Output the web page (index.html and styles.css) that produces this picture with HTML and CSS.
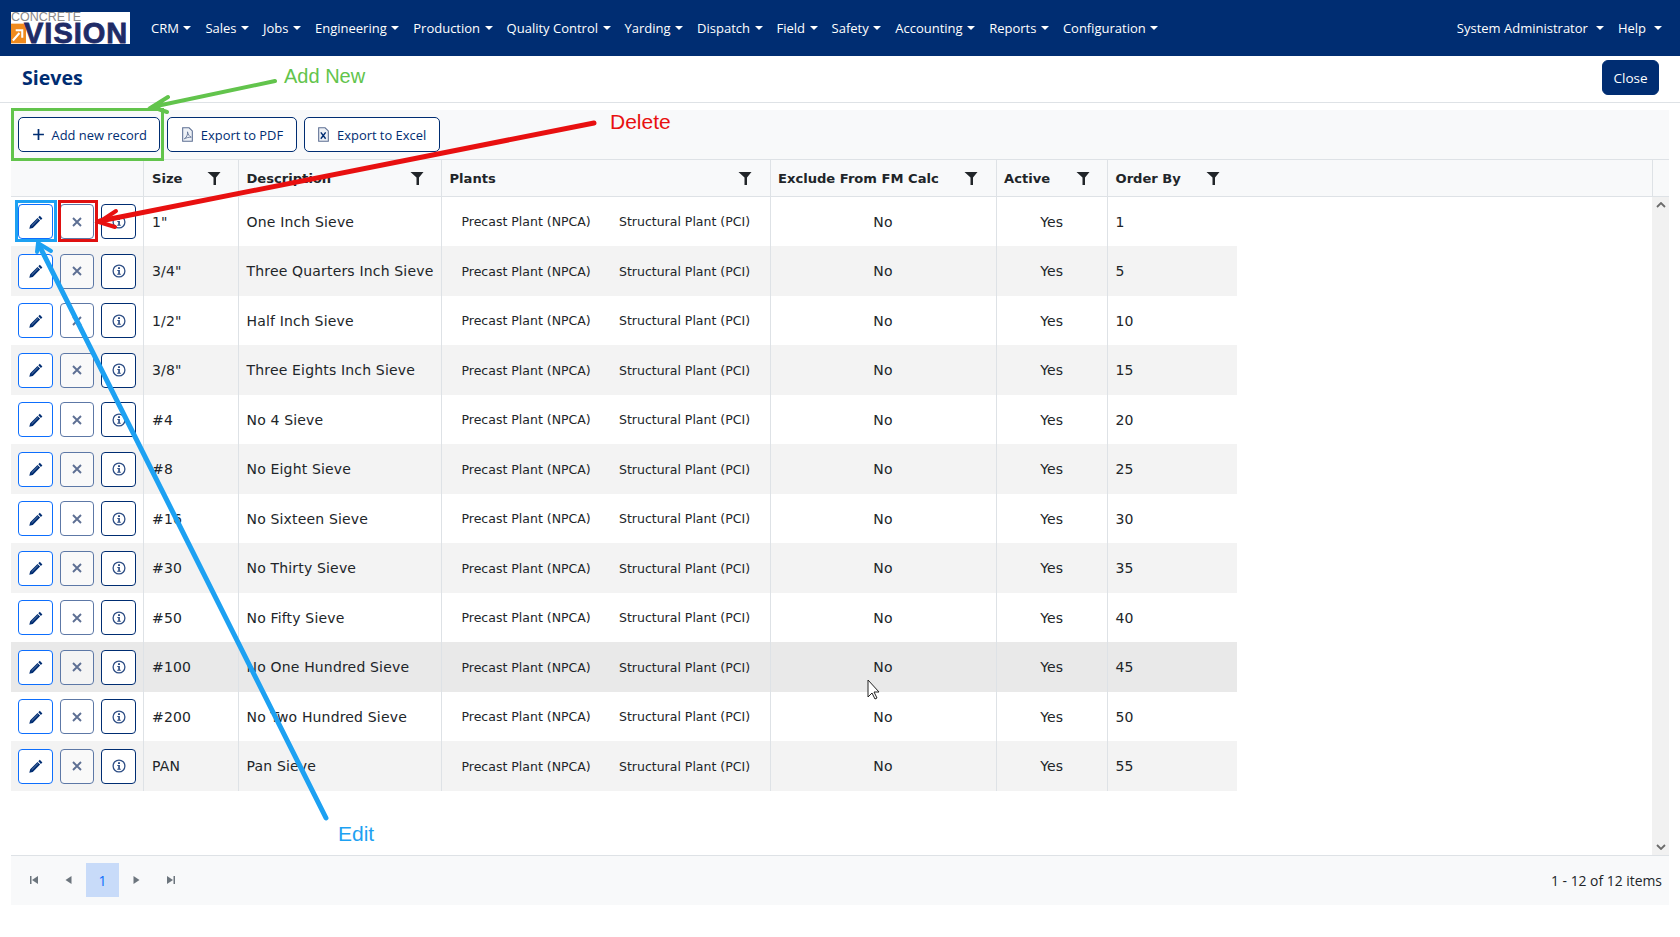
FILE: index.html
```html
<!DOCTYPE html>
<html lang="en">
<head>
<meta charset="utf-8">
<title>Sieves</title>
<link rel="stylesheet" href="styles.css">
</head>
<body>
<svg class="defs" width="0" height="0" aria-hidden="true">
  <symbol id="i-filter" viewBox="0 0 14 16"><path d="M.5 2h13L9 7.500V15H6.500V7.500z" fill="#212529"/></symbol>
  <symbol id="i-edit" viewBox="0 0 16 16"><path d="M11.800 1.800l2.600 2.600-1.500 1.500-2.600-2.600zM9.500 4l2.600 2.600-7.300 7.300-3.500.9.900-3.500z" fill="#002d72"/><path d="M3.700 11.800l6.300-6.300" stroke="#7f95bb" stroke-width=".8"/></symbol>
  <symbol id="i-x" viewBox="0 0 16 16"><path d="M4 4l8 8M12 4l-8 8" stroke="#5d6f93" stroke-width="1.900" fill="none"/></symbol>
  <symbol id="i-info" viewBox="0 0 16 16"><circle cx="8" cy="8" r="5.900" fill="none" stroke="#2f4f86" stroke-width="1.300"/><path d="M7 4.200h2V6H7zM6.300 7h2.600v3.700h.9v1.100H6.200v-1.100h1V8h-.9z" fill="#2f4f86"/></symbol>
</svg>

<nav class="navbar">
  <div class="logo">
    <span class="logo-top">CONCRETE</span>
    <span class="logo-mark"><svg viewBox="0 0 16 21" width="15" height="21"><rect width="16" height="21" fill="#f08a1d"/><path d="M2 18L9 10M5 7h7v8" stroke="#fff" stroke-width="2.200" fill="none"/></svg></span>
    <span class="logo-main">VISION</span>
  </div>
  <ul class="menu">
    <li class="menu-item">CRM</li>
    <li class="menu-item">Sales</li>
    <li class="menu-item">Jobs</li>
    <li class="menu-item">Engineering</li>
    <li class="menu-item">Production</li>
    <li class="menu-item">Quality Control</li>
    <li class="menu-item">Yarding</li>
    <li class="menu-item">Dispatch</li>
    <li class="menu-item">Field</li>
    <li class="menu-item">Safety</li>
    <li class="menu-item">Accounting</li>
    <li class="menu-item">Reports</li>
    <li class="menu-item">Configuration</li>
  </ul>
  <ul class="menu menu-right">
    <li class="menu-item wide">System Administrator</li>
    <li class="menu-item wide">Help</li>
  </ul>
</nav>

<header class="title-bar">
  <h1 class="title">Sieves</h1>
  <button class="close-btn">Close</button>
</header>

<main class="grid">
  <div class="toolbar">
    <button class="tool-btn"><svg class="tool-icon" viewBox="0 0 12 12"><path d="M6 1v10M1 6h10" stroke="#002d72" stroke-width="1.600"/></svg>Add new record</button>
    <button class="tool-btn"><svg class="tool-icon" viewBox="0 0 12 14"><path d="M1.500.7h6l3 3v9.600h-9z" fill="#eef1f6" stroke="#5d6f93"/><path d="M3 11c2-1 3.500-4 3-6.500C6.500 7 8 9 9.500 9.500 7 9.500 5 10 3 11z" fill="none" stroke="#5d6f93" stroke-width=".8"/></svg>Export to PDF</button>
    <button class="tool-btn"><svg class="tool-icon" viewBox="0 0 12 14"><path d="M1.500.7h6l3 3v9.600h-9z" fill="#eef1f6" stroke="#5d6f93"/><path d="M3.500 5l4.500 6M8 5l-4.500 6" stroke="#002d72" stroke-width="1.300"/></svg>Export to Excel</button>
  </div>

  <table class="table head">
    <colgroup><col class="c1"><col class="c2"><col class="c3"><col class="c4"><col class="c5"><col class="c6"><col class="c7"><col class="c8"><col class="c9"></colgroup>
    <thead>
      <tr>
        <th></th>
        <th><div class="th-in">Size<svg class="filter"><use href="#i-filter"/></svg></div></th>
        <th><div class="th-in">Description<svg class="filter"><use href="#i-filter"/></svg></div></th>
        <th><div class="th-in">Plants<svg class="filter"><use href="#i-filter"/></svg></div></th>
        <th><div class="th-in">Exclude From FM Calc<svg class="filter"><use href="#i-filter"/></svg></div></th>
        <th><div class="th-in">Active<svg class="filter"><use href="#i-filter"/></svg></div></th>
        <th><div class="th-in">Order By<svg class="filter"><use href="#i-filter"/></svg></div></th>
        <th class="no-border"></th>
        <th></th>
      </tr>
    </thead>
  </table>

  <div class="body-wrap">
    <div class="body-scroll">
      <table class="table rows">
        <colgroup><col class="c1"><col class="c2"><col class="c3"><col class="c4"><col class="c5"><col class="c6"><col class="c7"></colgroup>
        <tbody>
          <tr><td class="acts"><button class="ib ib-edit"><svg><use href="#i-edit"/></svg></button><button class="ib ib-del"><svg><use href="#i-x"/></svg></button><button class="ib ib-info"><svg><use href="#i-info"/></svg></button></td><td>1"</td><td>One Inch Sieve</td><td class="plants"><span>Precast Plant (NPCA)</span><span>Structural Plant (PCI)</span></td><td class="ctr">No</td><td class="ctr">Yes</td><td>1</td></tr>
          <tr><td class="acts"><button class="ib ib-edit"><svg><use href="#i-edit"/></svg></button><button class="ib ib-del"><svg><use href="#i-x"/></svg></button><button class="ib ib-info"><svg><use href="#i-info"/></svg></button></td><td>3/4"</td><td>Three Quarters Inch Sieve</td><td class="plants"><span>Precast Plant (NPCA)</span><span>Structural Plant (PCI)</span></td><td class="ctr">No</td><td class="ctr">Yes</td><td>5</td></tr>
          <tr><td class="acts"><button class="ib ib-edit"><svg><use href="#i-edit"/></svg></button><button class="ib ib-del"><svg><use href="#i-x"/></svg></button><button class="ib ib-info"><svg><use href="#i-info"/></svg></button></td><td>1/2"</td><td>Half Inch Sieve</td><td class="plants"><span>Precast Plant (NPCA)</span><span>Structural Plant (PCI)</span></td><td class="ctr">No</td><td class="ctr">Yes</td><td>10</td></tr>
          <tr><td class="acts"><button class="ib ib-edit"><svg><use href="#i-edit"/></svg></button><button class="ib ib-del"><svg><use href="#i-x"/></svg></button><button class="ib ib-info"><svg><use href="#i-info"/></svg></button></td><td>3/8"</td><td>Three Eights Inch Sieve</td><td class="plants"><span>Precast Plant (NPCA)</span><span>Structural Plant (PCI)</span></td><td class="ctr">No</td><td class="ctr">Yes</td><td>15</td></tr>
          <tr><td class="acts"><button class="ib ib-edit"><svg><use href="#i-edit"/></svg></button><button class="ib ib-del"><svg><use href="#i-x"/></svg></button><button class="ib ib-info"><svg><use href="#i-info"/></svg></button></td><td>#4</td><td>No 4 Sieve</td><td class="plants"><span>Precast Plant (NPCA)</span><span>Structural Plant (PCI)</span></td><td class="ctr">No</td><td class="ctr">Yes</td><td>20</td></tr>
          <tr><td class="acts"><button class="ib ib-edit"><svg><use href="#i-edit"/></svg></button><button class="ib ib-del"><svg><use href="#i-x"/></svg></button><button class="ib ib-info"><svg><use href="#i-info"/></svg></button></td><td>#8</td><td>No Eight Sieve</td><td class="plants"><span>Precast Plant (NPCA)</span><span>Structural Plant (PCI)</span></td><td class="ctr">No</td><td class="ctr">Yes</td><td>25</td></tr>
          <tr><td class="acts"><button class="ib ib-edit"><svg><use href="#i-edit"/></svg></button><button class="ib ib-del"><svg><use href="#i-x"/></svg></button><button class="ib ib-info"><svg><use href="#i-info"/></svg></button></td><td>#16</td><td>No Sixteen Sieve</td><td class="plants"><span>Precast Plant (NPCA)</span><span>Structural Plant (PCI)</span></td><td class="ctr">No</td><td class="ctr">Yes</td><td>30</td></tr>
          <tr><td class="acts"><button class="ib ib-edit"><svg><use href="#i-edit"/></svg></button><button class="ib ib-del"><svg><use href="#i-x"/></svg></button><button class="ib ib-info"><svg><use href="#i-info"/></svg></button></td><td>#30</td><td>No Thirty Sieve</td><td class="plants"><span>Precast Plant (NPCA)</span><span>Structural Plant (PCI)</span></td><td class="ctr">No</td><td class="ctr">Yes</td><td>35</td></tr>
          <tr><td class="acts"><button class="ib ib-edit"><svg><use href="#i-edit"/></svg></button><button class="ib ib-del"><svg><use href="#i-x"/></svg></button><button class="ib ib-info"><svg><use href="#i-info"/></svg></button></td><td>#50</td><td>No Fifty Sieve</td><td class="plants"><span>Precast Plant (NPCA)</span><span>Structural Plant (PCI)</span></td><td class="ctr">No</td><td class="ctr">Yes</td><td>40</td></tr>
          <tr class="hover"><td class="acts"><button class="ib ib-edit"><svg><use href="#i-edit"/></svg></button><button class="ib ib-del"><svg><use href="#i-x"/></svg></button><button class="ib ib-info"><svg><use href="#i-info"/></svg></button></td><td>#100</td><td>No One Hundred Sieve</td><td class="plants"><span>Precast Plant (NPCA)</span><span>Structural Plant (PCI)</span></td><td class="ctr">No</td><td class="ctr">Yes</td><td>45</td></tr>
          <tr><td class="acts"><button class="ib ib-edit"><svg><use href="#i-edit"/></svg></button><button class="ib ib-del"><svg><use href="#i-x"/></svg></button><button class="ib ib-info"><svg><use href="#i-info"/></svg></button></td><td>#200</td><td>No Two Hundred Sieve</td><td class="plants"><span>Precast Plant (NPCA)</span><span>Structural Plant (PCI)</span></td><td class="ctr">No</td><td class="ctr">Yes</td><td>50</td></tr>
          <tr><td class="acts"><button class="ib ib-edit"><svg><use href="#i-edit"/></svg></button><button class="ib ib-del"><svg><use href="#i-x"/></svg></button><button class="ib ib-info"><svg><use href="#i-info"/></svg></button></td><td>PAN</td><td>Pan Sieve</td><td class="plants"><span>Precast Plant (NPCA)</span><span>Structural Plant (PCI)</span></td><td class="ctr">No</td><td class="ctr">Yes</td><td>55</td></tr>
        </tbody>
      </table>
    </div>
    <div class="scrollbar">
      <svg class="sb-arrow" viewBox="0 0 10 6"><path d="M1 5l4-4 4 4" stroke="#6b6b6b" stroke-width="1.800" fill="none"/></svg>
      <svg class="sb-arrow" viewBox="0 0 10 6"><path d="M1 1l4 4 4-4" stroke="#6b6b6b" stroke-width="1.800" fill="none"/></svg>
    </div>
  </div>

  <footer class="pager">
    <div class="pager-nav">
      <span class="pg"><svg viewBox="0 0 8 8"><path d="M0 0h1.500v8H0zM8 0v8L2 4z" fill="#6c757d"/></svg></span>
      <span class="pg"><svg viewBox="0 0 8 8"><path d="M6.500 0v8L.5 4z" fill="#6c757d"/></svg></span>
      <span class="pg-current">1</span>
      <span class="pg"><svg viewBox="0 0 8 8"><path d="M1.500 0v8l6-4z" fill="#6c757d"/></svg></span>
      <span class="pg"><svg viewBox="0 0 8 8"><path d="M8 0H6.500v8H8zM0 0v8l6-4z" fill="#6c757d"/></svg></span>
    </div>
    <div class="pager-info">1 - 12 of 12 items</div>
  </footer>
</main>

<svg class="overlay" width="1680" height="937" viewBox="0 0 1680 937">
  <g fill="none" stroke-linecap="round">
    <rect x="12.500" y="109.500" width="150" height="50" stroke="#62c44c" stroke-width="3"/>
    <path d="M275 81L152 107M168 97L152 107L167 112" stroke="#62c44c" stroke-width="4"/>
    <path d="M594 123L100 221" stroke="#e81010" stroke-width="5"/>
    <path d="M116 211L99 222L115 227" stroke="#e81010" stroke-width="4"/>
    <rect x="16.500" y="201.500" width="39" height="39" stroke="#1da1f2" stroke-width="3"/>
    <rect x="59.500" y="201.500" width="37" height="39" stroke="#e01010" stroke-width="3"/>
    <path d="M326 818L39 245" stroke="#1da1f2" stroke-width="5"/>
    <path d="M37 252L38 243L51 251" stroke="#1da1f2" stroke-width="4"/>
  </g>
  <text class="note" x="284" y="83" fill="#62c44c">Add New</text>
  <text class="note note-lg" x="610" y="129" fill="#e81010">Delete</text>
  <text class="note note-lg" x="338" y="841" fill="#1da1f2">Edit</text>
  <path d="M868 680v17l4-4 3 6 2-1-3-6h5z" fill="#fff" stroke="#222" stroke-width="1"/>
</svg>
</body>
</html>
```

FILE: styles.css
```css
* { box-sizing: border-box; }
html, body { margin: 0; padding: 0; }
body {
  position: relative;
  width: 1680px;
  height: 937px;
  overflow: hidden;
  background: #fff;
  font-family: "Open Sans", "Noto Sans", sans-serif;
  font-size: 14px;
  color: #212529;
}
.defs { position: absolute; }

.navbar {
  display: flex;
  align-items: center;
  height: 56px;
  padding: 0 11px;
  background: #002d72;
  color: #fff;
}
.logo {
  position: relative;
  flex: none;
  width: 119px;
  height: 32px;
  margin-right: 14px;
  background: #fff;
}
.logo-top {
  position: absolute;
  left: 0;
  top: 0;
  font: 12.500px/11px "Liberation Sans", sans-serif;
  color: #8a8a8a;
}
.logo-mark { position: absolute; left: 0; top: 11px; display: block; height: 21px; }
.logo-mark svg { display: block; }
.logo-main {
  position: absolute;
  left: 13px;
  top: 11px;
  font: 700 29px/21px "Liberation Sans", sans-serif;
  letter-spacing: 1px;
  color: #1f2b66;
  -webkit-text-stroke: .8px #1f2b66;
}
.menu { display: flex; list-style: none; margin: 0; padding: 0; }
.menu-right { margin-left: auto; }
.menu-item {
  display: flex;
  align-items: center;
  padding: 0 7px;
  font-size: 13px;
  white-space: nowrap;
}
.menu-item::after {
  content: "";
  margin-left: 4.500px;
  border-top: 4px solid #fff;
  border-left: 4px solid transparent;
  border-right: 4px solid transparent;
}
.menu-item.wide::after { margin-left: 8px; }

.title-bar {
  display: flex;
  align-items: center;
  justify-content: space-between;
  height: 47px;
  padding: 0 21px 3px 22px;
  border-bottom: 1px solid #dee2e6;
}
.title { margin: 0; font-size: 19.600px; font-weight: 700; color: #002d72; }
.close-btn {
  width: 57px;
  height: 35px;
  border: 1px solid #002d72;
  border-radius: 6px;
  background: #002d72;
  color: #fff;
  font: 13.500px "Open Sans", sans-serif;
}

.grid { margin: 7px 11px 0; width: 1658px; }
.toolbar {
  display: flex;
  align-items: center;
  gap: 7px;
  height: 50px;
  padding: 0 7px;
  background: #f8f9fa;
  border-bottom: 1px solid #dee2e6;
}
.tool-btn {
  display: flex;
  align-items: center;
  justify-content: center;
  gap: 7px;
  height: 35px;
  padding: 0 12.500px;
  background: #fff;
  border: 1px solid #002d72;
  border-radius: 5px;
  color: #002d72;
  font: 12.900px "Open Sans", sans-serif;
}
.tool-icon { width: 13px; height: 15px; }

.table {
  border-collapse: collapse;
  table-layout: fixed;
  font-family: "DejaVu Sans", sans-serif;
  font-size: 14px;
}
.head { width: 1658px; background: #f8f9fa; font-size: 13.100px; }
.rows { width: 1226px; letter-spacing: .17px; }
.c1 { width: 132px; }
.c2 { width: 95.500px; }
.c3 { width: 203px; }
.c4 { width: 328.500px; }
.c5 { width: 226px; }
.c6 { width: 111.500px; }
.c7 { width: 129.500px; }
.c8 { width: 415px; }
.c9 { width: 17px; }

.head th {
  height: 36px;
  padding: 1px 17.500px 0 7.500px;
  border-left: 1px solid #dee2e6;
  border-bottom: 1px solid #dee2e6;
  font-weight: 700;
  text-align: left;
  white-space: nowrap;
}
.head th:first-child, .head th.no-border { border-left: 0; }
.head th:nth-child(2) { padding-left: 8.500px; }
.th-in { display: flex; align-items: center; justify-content: space-between; }
.filter { width: 14px; height: 16px; }

.body-wrap { display: flex; height: 659px; border-bottom: 1px solid #dee2e6; }
.body-scroll { flex: 1; }
.scrollbar {
  display: flex;
  flex-direction: column;
  justify-content: space-between;
  align-items: center;
  width: 17px;
  padding: 4px 0;
  background: #f1f1f1;
}
.sb-arrow { width: 10px; height: 6px; margin: 1px 0; }

.rows td {
  height: 49.500px;
  padding: 1px 7.500px 0;
  border-left: 1px solid #dee2e6;
  white-space: nowrap;
  color: #212529;
}
.rows td:first-child { border-left: 0; }
.rows td:nth-child(2) { padding-left: 8.500px; }
.rows tr:nth-child(even) td { background: #f3f3f3; }
.rows tr.hover td { background: #e9e9e9; }
.rows td.ctr { text-align: center; }
.rows td.acts { padding: 1px 0 0 7px; }
.rows td.plants {
  padding: 1px 0 0 19.500px;
  font-size: 12.500px;
  letter-spacing: 0;
}
.plants span { display: inline-block; width: 157.500px; }

.acts { font-size: 0; }
.ib {
  display: inline-flex;
  align-items: center;
  justify-content: center;
  width: 35px;
  height: 35px;
  margin-right: 7px;
  padding: 0;
  border: 1px solid #002d72;
  border-radius: 4px;
  background: #fff;
  vertical-align: middle;
}
.ib svg { width: 16px; height: 16px; }
.ib-edit { border-color: #0d6efd; }
.ib-del { width: 34px; border-color: #5d78a6; background: rgba(255, 255, 255, .5); }

.pager {
  display: flex;
  align-items: center;
  justify-content: space-between;
  height: 49px;
  padding: 0 7px 0 0;
  background: #f8f9fa;
}
.pager-nav { display: flex; align-items: center; padding-left: 6px; }
.pg {
  display: flex;
  align-items: center;
  justify-content: center;
  width: 34.500px;
  height: 34px;
}
.pg svg { width: 8px; height: 8px; }
.pg-current {
  display: flex;
  align-items: center;
  justify-content: center;
  width: 33px;
  height: 34px;
  background: #c8dbf9;
  color: #0d6efd;
}
.pager-info { font-size: 13.900px; }

.overlay { position: absolute; left: 0; top: 0; pointer-events: none; }
.note { font: 20px "Liberation Sans", sans-serif; }
.note-lg { font-size: 21px; }
```
